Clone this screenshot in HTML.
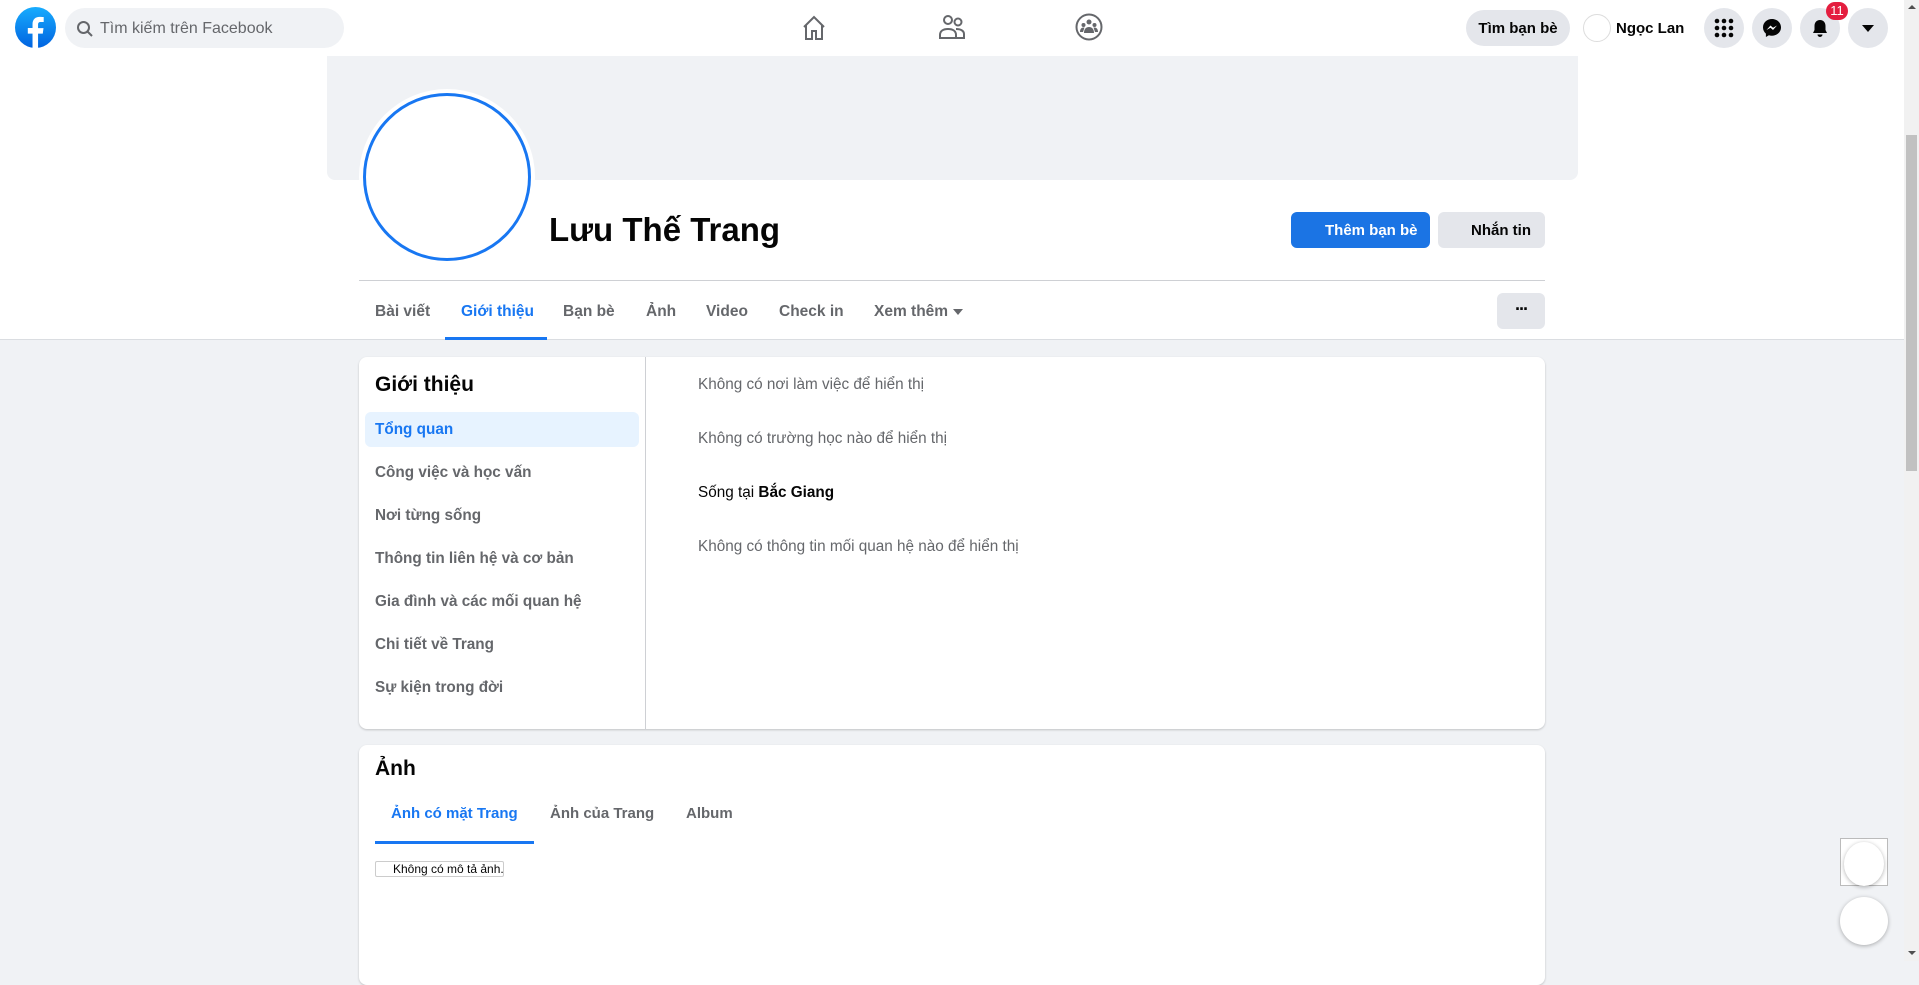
<!DOCTYPE html>
<html><head><meta charset="utf-8"><style>
*{box-sizing:border-box;margin:0;padding:0}
body{width:1919px;height:961px;overflow:hidden;background:#f0f2f5;font-family:"Liberation Sans",sans-serif;position:relative}
.a{position:absolute}
.top{left:0;top:0;width:1904px;height:56px;background:#fff}
.hdr{left:0;top:56px;width:1904px;height:284px;background:#fff;border-bottom:1px solid #dadde1}
.circ{border-radius:50%;background:#e4e6eb}
.t{white-space:nowrap}
.nav{font-size:15.5px;font-weight:bold;color:#65676b}
.side{left:375px;font-size:15.3px;font-weight:bold;color:#65676b}
.info{left:698px;font-size:15.3px;color:#65676b}
</style></head><body>
<div class="a top"></div>
<svg class="a" style="left:15px;top:7px" width="41" height="41" viewBox="0 0 40 40"><defs><linearGradient id="g" x1="0" y1="0" x2="0" y2="1"><stop offset="0" stop-color="#18acfe"/><stop offset="1" stop-color="#0163e0"/></linearGradient></defs><circle cx="20" cy="20" r="20" fill="url(#g)"/><path d="M22.5 40V26h4.6l.7-5.4h-5.3v-3.4c0-1.6.5-2.6 2.7-2.6h2.8V9.8c-.5-.1-2.2-.2-4.1-.2-4 0-6.8 2.5-6.8 7v3.9h-4.6V26h4.6v14z" fill="#fff"/></svg>
<div class="a" style="left:65px;top:8px;width:279px;height:40px;border-radius:20px;background:#f0f2f5"></div>
<svg class="a" style="left:76px;top:20px" width="18" height="18" viewBox="0 0 18 18"><circle cx="7.5" cy="7.5" r="5.5" fill="none" stroke="#65676b" stroke-width="2"/><path d="M11.5 11.5l4.5 4.5" stroke="#65676b" stroke-width="2"/></svg>
<div class="a t" style="left:100px;top:20px;font-size:16px;color:#65676b">Tìm kiếm trên Facebook</div>
<svg class="a" style="left:800px;top:14px" width="28" height="28" viewBox="0 0 28 28" fill="none" stroke="#65676b" stroke-width="2"><path d="M4 13L14 3l10 10M6 11v14h6v-8h4v8h6V11"/></svg>
<svg class="a" style="left:937px;top:13px" width="30" height="28" viewBox="0 0 30 28" fill="none" stroke="#65676b" stroke-width="2"><circle cx="11" cy="7" r="4"/><circle cx="21" cy="9" r="3.5"/><path d="M3 25v-3c0-4 3-6 8-6s8 2 8 6v3zM19 16c5 0 8 2 8 5v4h-8"/></svg>
<svg class="a" style="left:1075px;top:13px" width="28" height="28" viewBox="0 0 28 28"><circle cx="14" cy="14" r="12.5" fill="none" stroke="#65676b" stroke-width="2"/><circle cx="14" cy="9" r="2.5" fill="#65676b"/><circle cx="8.5" cy="12" r="2" fill="#65676b"/><circle cx="19.5" cy="12" r="2" fill="#65676b"/><path d="M9 20c0-4 2-6 5-6s5 2 5 6zM5 19c0-3 1.5-4.5 3.5-4.5h1L8 19zM23 19c0-3-1.5-4.5-3.5-4.5h-1L20 19z" fill="#65676b"/></svg>
<div class="a" style="left:1466px;top:10px;width:104px;height:36px;border-radius:18px;background:#e4e6eb"></div>
<div class="a t" style="left:1466px;top:20px;width:104px;text-align:center;font-size:15px;font-weight:bold;color:#050505">Tìm bạn bè</div>
<div class="a" style="left:1583px;top:14px;width:28px;height:28px;border-radius:50%;border:1px solid #ddd;background:#fff"></div>
<div class="a t" style="left:1616px;top:20px;font-size:15px;font-weight:bold;color:#050505">Ngọc Lan</div>
<div class="a circ" style="left:1704px;top:8px;width:40px;height:40px"></div>
<svg class="a" style="left:1714px;top:18px" width="20" height="20" viewBox="0 0 20 20" fill="#050505"><circle cx="3" cy="3" r="2.3"/><circle cx="10" cy="3" r="2.3"/><circle cx="17" cy="3" r="2.3"/><circle cx="3" cy="10" r="2.3"/><circle cx="10" cy="10" r="2.3"/><circle cx="17" cy="10" r="2.3"/><circle cx="3" cy="17" r="2.3"/><circle cx="10" cy="17" r="2.3"/><circle cx="17" cy="17" r="2.3"/></svg>
<div class="a circ" style="left:1752px;top:8px;width:40px;height:40px"></div>
<svg class="a" style="left:1762px;top:18px" width="20" height="20" viewBox="0 0 20 20"><path d="M10 1C5 1 1 4.6 1 9.4c0 2.5 1.1 4.7 2.9 6.2V19l3-1.7c1 .3 2 .4 3.1.4 5 0 9-3.6 9-8.3S15 1 10 1z" fill="#050505"/><path d="M4.5 12l4-4.5 2.5 2.3 4-2.3-4 4.5-2.5-2.3z" fill="#fff"/></svg>
<div class="a circ" style="left:1800px;top:8px;width:40px;height:40px"></div>
<svg class="a" style="left:1810px;top:18px" width="20" height="20" viewBox="0 0 20 20" fill="#050505"><path d="M10 2c-3.5 0-5.5 2.5-5.5 6v4L3 15h14l-1.5-3V8c0-3.5-2-6-5.5-6zM7.5 16.5a2.5 2.5 0 005 0z"/></svg>
<div class="a" style="left:1826px;top:2px;width:22px;height:18px;border-radius:9px;background:#e41e3f;color:#fff;font-size:13px;text-align:center;line-height:18px">11</div>
<div class="a circ" style="left:1848px;top:8px;width:40px;height:40px"></div>
<div class="a" style="left:1862px;top:25px;width:0;height:0;border-left:6px solid transparent;border-right:6px solid transparent;border-top:7px solid #050505"></div>
<div class="a" style="left:1904px;top:0;width:15px;height:961px;background:#f1f1f1"></div>
<div class="a" style="left:1906px;top:135px;width:11px;height:336px;background:#c1c1c1"></div>
<div class="a" style="left:1908px;top:5px;width:0;height:0;border-left:4px solid transparent;border-right:4px solid transparent;border-bottom:4px solid #505050"></div>
<div class="a" style="left:1908px;top:951px;width:0;height:0;border-left:4px solid transparent;border-right:4px solid transparent;border-top:4px solid #505050"></div>
<div class="a hdr"></div>
<div class="a" style="left:327px;top:56px;width:1251px;height:124px;background:#f0f2f5;border-radius:0 0 8px 8px"></div>
<div class="a" style="left:359px;top:89px;width:176px;height:176px;border-radius:50%;background:#fff"></div>
<div class="a" style="left:363px;top:93px;width:168px;height:168px;border-radius:50%;border:3px solid #1877f2;background:#fff"></div>
<div class="a t" style="left:549px;top:211px;font-size:33px;font-weight:bold;color:#050505">Lưu Thế Trang</div>
<div class="a" style="left:1291px;top:212px;width:139px;height:36px;border-radius:6px;background:#1b74e4"></div>
<div class="a t" style="left:1325px;top:222px;font-size:15px;font-weight:bold;color:#fff">Thêm bạn bè</div>
<div class="a" style="left:1438px;top:212px;width:107px;height:36px;border-radius:6px;background:#e4e6eb"></div>
<div class="a t" style="left:1471px;top:222px;font-size:15px;font-weight:bold;color:#050505">Nhắn tin</div>
<div class="a" style="left:359px;top:280px;width:1186px;height:1px;background:#ced0d4"></div>
<div class="a t nav" style="left:375px;top:303px">Bài viết</div>
<div class="a t nav" style="left:461px;top:303px;color:#1877f2">Giới thiệu</div>
<div class="a" style="left:445px;top:337px;width:102px;height:3px;background:#1877f2"></div>
<div class="a t nav" style="left:563px;top:303px">Bạn bè</div>
<div class="a t nav" style="left:646px;top:303px">Ảnh</div>
<div class="a t nav" style="left:706px;top:303px">Video</div>
<div class="a t nav" style="left:779px;top:303px">Check in</div>
<div class="a t nav" style="left:874px;top:303px">Xem thêm</div>
<div class="a" style="left:953px;top:309px;width:0;height:0;border-left:5px solid transparent;border-right:5px solid transparent;border-top:6px solid #65676b"></div>
<div class="a" style="left:1497px;top:293px;width:48px;height:36px;border-radius:6px;background:#e4e6eb"></div>
<div class="a t" style="left:1497px;top:299px;width:48px;text-align:center;font-size:18px;font-weight:bold;color:#050505;letter-spacing:-2px">···</div>
<div class="a" style="left:359px;top:357px;width:1186px;height:372px;background:#fff;border-radius:8px;box-shadow:0 1px 2px rgba(0,0,0,.2)"></div>
<div class="a" style="left:645px;top:357px;width:1px;height:372px;background:#ced0d4"></div>
<div class="a t" style="left:375px;top:373px;font-size:21px;font-weight:bold;color:#050505">Giới thiệu</div>
<div class="a" style="left:365px;top:412px;width:274px;height:35px;border-radius:6px;background:#e7f3ff"></div>
<div class="a t side" style="top:421px;color:#1877f2">Tổng quan</div>
<div class="a t side" style="top:464px">Công việc và học vấn</div>
<div class="a t side" style="top:507px">Nơi từng sống</div>
<div class="a t side" style="top:550px">Thông tin liên hệ và cơ bản</div>
<div class="a t side" style="top:593px">Gia đình và các mối quan hệ</div>
<div class="a t side" style="top:636px">Chi tiết về Trang</div>
<div class="a t side" style="top:679px">Sự kiện trong đời</div>
<div class="a t info" style="top:376px">Không có nơi làm việc để hiển thị</div>
<div class="a t info" style="top:430px">Không có trường học nào để hiển thị</div>
<div class="a t info" style="top:484px;color:#050505">Sống tại <b>Bắc Giang</b></div>
<div class="a t info" style="top:538px">Không có thông tin mối quan hệ nào để hiển thị</div>
<div class="a" style="left:359px;top:745px;width:1186px;height:240px;background:#fff;border-radius:8px;box-shadow:0 1px 2px rgba(0,0,0,.2)"></div>
<div class="a t" style="left:375px;top:757px;font-size:21px;font-weight:bold;color:#050505">Ảnh</div>
<div class="a t nav" style="left:391px;top:805px;font-size:15px;color:#1877f2">Ảnh có mặt Trang</div>
<div class="a t nav" style="left:550px;top:805px;font-size:15px">Ảnh của Trang</div>
<div class="a t nav" style="left:686px;top:805px;font-size:15px">Album</div>
<div class="a" style="left:375px;top:841px;width:159px;height:3px;background:#1877f2"></div>
<div class="a" style="left:375px;top:861px;width:129px;height:16px;border:1px solid #ccc;border-radius:2px"></div>
<div class="a t" style="left:393px;top:862px;font-size:12px;color:#050505">Không có mô tả ảnh.</div>
<div class="a" style="left:1840px;top:838px;width:48px;height:48px;border:1px solid #bbb;background:#fff"></div>
<div class="a" style="left:1844px;top:842px;width:40px;height:44px;border-radius:50%;background:#fff;box-shadow:0 1px 4px rgba(0,0,0,.3)"></div>
<div class="a" style="left:1840px;top:897px;width:48px;height:48px;border-radius:50%;background:#fff;box-shadow:0 1px 4px rgba(0,0,0,.3)"></div>
</body></html>
